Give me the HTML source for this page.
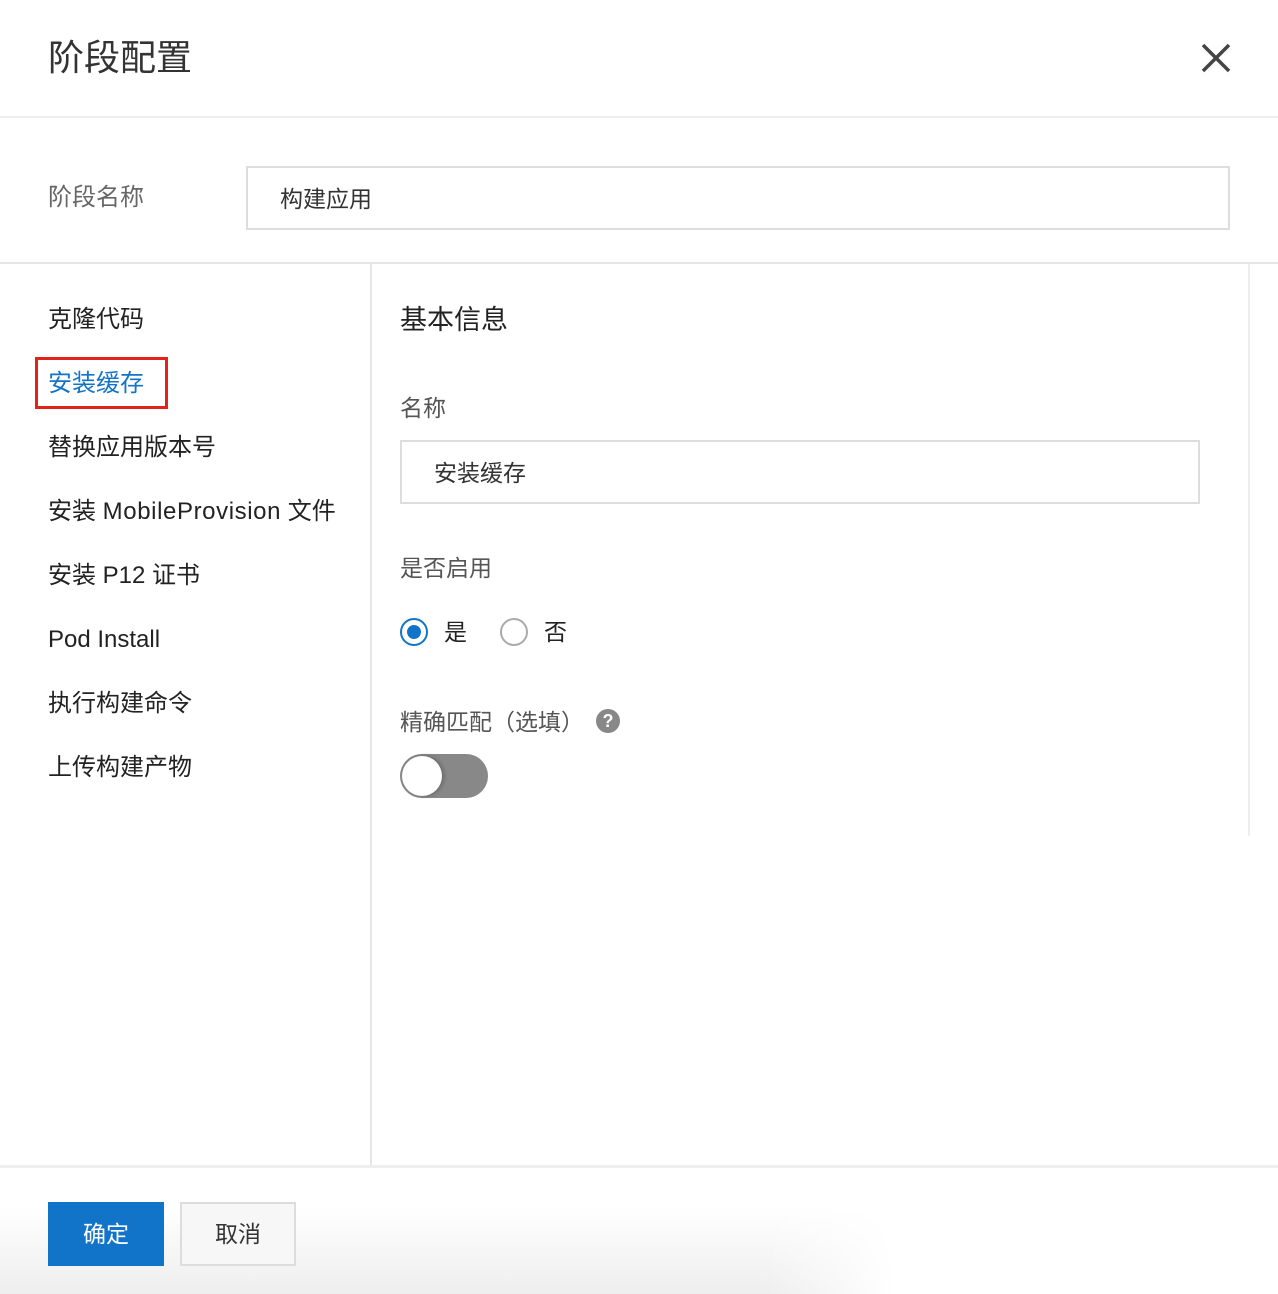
<!DOCTYPE html>
<html><head><meta charset="utf-8"><style>
*{margin:0;padding:0;box-sizing:border-box}
body{width:1278px;height:1294px;position:relative;background:#fff;font-family:"Liberation Sans","Noto Sans CJK SC",sans-serif;color:#222;overflow:hidden}
.a{position:absolute;white-space:nowrap}
</style></head><body>
<div class="a" style="left:48px;top:34px;font-size:36px;line-height:48px;color:#333">阶段配置</div>
<svg class="a" style="left:1200px;top:42px" width="32" height="32" viewBox="0 0 32 32"><path d="M3 3L29 29M29 3L3 29" stroke="#444" stroke-width="3.5"/></svg>
<div class="a" style="left:0;top:116px;width:1278px;height:2px;background:#eee"></div>
<div class="a" style="left:48px;top:182px;font-size:24px;line-height:32px;color:#666">阶段名称</div>
<div class="a" style="left:246px;top:166px;width:984px;height:64px;border:2px solid #ddd;font-size:23px;line-height:62px;padding-left:32px;color:#333">构建应用</div>
<div class="a" style="left:0;top:262px;width:1278px;height:2px;background:#e6e6e6"></div>
<div class="a" style="left:370px;top:264px;width:2px;height:902px;background:#e6e6e6"></div>
<div class="a" style="left:1248px;top:264px;width:2px;height:572px;background:#eee"></div>
<div class="a" style="left:0;top:1165px;width:1278px;height:3px;background:#eee"></div>
<div class="a" style="left:48px;top:288px;font-size:24px;line-height:64px;color:#222">克隆代码<br><span style="color:#1274c9">安装缓存</span><br>替换应用版本号<br>安装 <span style="letter-spacing:0.6px">MobileProvision</span> 文件<br>安装 P12 证书<br>Pod Install<br>执行构建命令<br>上传构建产物</div>
<div class="a" style="left:35px;top:357px;width:133px;height:52px;border:3px solid #e2231a"></div>
<div class="a" style="left:400px;top:302px;font-size:27px;line-height:36px;color:#222">基本信息</div>
<div class="a" style="left:400px;top:392px;font-size:23px;line-height:32px;color:#555">名称</div>
<div class="a" style="left:400px;top:440px;width:800px;height:64px;border:2px solid #ddd;font-size:23px;line-height:62px;padding-left:32px;color:#333">安装缓存</div>
<div class="a" style="left:400px;top:552px;font-size:23px;line-height:32px;color:#555">是否启用</div>
<div class="a" style="left:400px;top:618px;width:28px;height:28px;border:2px solid #1274c9;border-radius:50%"><div style="position:absolute;left:5px;top:5px;width:14px;height:14px;border-radius:50%;background:#1274c9"></div></div>
<div class="a" style="left:444px;top:616px;font-size:23px;line-height:32px">是</div>
<div class="a" style="left:500px;top:618px;width:28px;height:28px;border:2px solid #aaa;border-radius:50%"></div>
<div class="a" style="left:544px;top:616px;font-size:23px;line-height:32px">否</div>
<div class="a" style="left:400px;top:706px;font-size:23px;line-height:32px;color:#555">精确匹配（选填）</div>
<div class="a" style="left:596px;top:709px;width:24px;height:24px;border-radius:50%;background:#888;color:#fff;font-size:18px;font-weight:bold;line-height:24px;text-align:center">?</div>
<div class="a" style="left:400px;top:754px;width:88px;height:44px;border-radius:22px;background:#888"><div style="position:absolute;left:2px;top:2px;width:40px;height:40px;border-radius:50%;background:#fff;box-shadow:2px 0 4px rgba(0,0,0,.25)"></div></div>
<div class="a" style="left:0;top:1168px;width:1278px;height:126px;background:linear-gradient(180deg,#fff 30%,#eee 100%);-webkit-mask-image:linear-gradient(90deg,#000 60%,transparent 70%)"></div>
<div class="a" style="left:48px;top:1202px;width:116px;height:64px;background:#1274c9;color:#fff;font-size:23px;line-height:64px;text-align:center">确定</div>
<div class="a" style="left:180px;top:1202px;width:116px;height:64px;background:#f7f7f7;border:2px solid #ddd;color:#333;font-size:23px;line-height:60px;text-align:center">取消</div>
</body></html>
